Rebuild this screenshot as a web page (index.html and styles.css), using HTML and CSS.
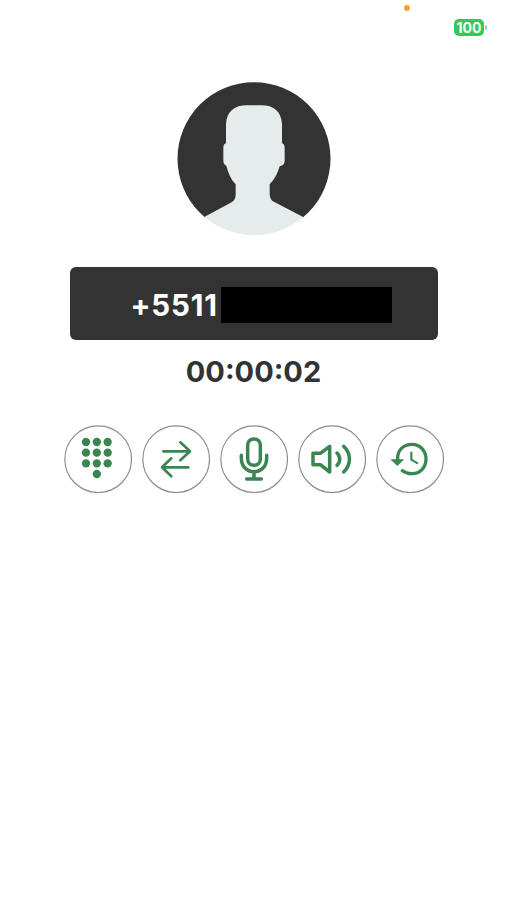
FILE: index.html
```html
<!DOCTYPE html>
<html lang="en">
<head>
<meta charset="utf-8">
<title>Call</title>
<link rel="stylesheet" href="styles.css">
</head>
<body>
<header class="status">
  <span class="mic-dot"></span>
  <span class="battery"><span class="level">100</span><span class="cap"></span></span>
</header>
<main class="call">
  <svg class="avatar" viewBox="21 21 462 462">
    <defs><clipPath id="round"><circle cx="252" cy="251" r="229.500"/></clipPath></defs>
    <g clip-path="url(#round)">
      <path fill="#333" d="M0 0H500V428H0Z"/>
      <path fill="#e6ebec" d="M168 205V147C170 108 196 91 229 91H275C309 91 334 108 336 147V205C342 206 344 212 344 221V256C344 267 339 272 329 274C323 294 314 313 299 328V356C299 368 303 376 313 381L398 425L430 500H70L104 425L185 382C194 377 197 369 197 358V328C183 313 174 294 169 272C162 269 160 264 160 255V220C160 211 162 206 168 205Z"/>
    </g>
  </svg>
  <div class="number"><span class="prefix">+5511</span><span class="redacted"></span></div>
  <div class="timer">00:00:02</div>
  <nav class="actions">
    <button class="action" aria-label="Keypad"><svg viewBox="12 15 204 204">
      <circle class="ring" cx="114.500" cy="117.500" r="100"/>
      <g class="solid"><circle cx="78" cy="66" r="12.500"/><circle cx="110.500" cy="66" r="12.500"/><circle cx="143" cy="66" r="12.500"/><circle cx="78" cy="98" r="12.500"/><circle cx="110.500" cy="98" r="12.500"/><circle cx="143" cy="98" r="12.500"/><circle cx="78" cy="130" r="12.500"/><circle cx="110.500" cy="130" r="12.500"/><circle cx="143" cy="130" r="12.500"/><circle cx="110.500" cy="162" r="12.500"/></g>
    </svg></button>
    <button class="action" aria-label="Transfer"><svg viewBox="12 15 204 204">
      <circle class="ring" cx="114.500" cy="117.500" r="100"/>
      <path class="line thin" d="M76 94H156M127 67L156 94L127 121M151 142H72M100 115L72 142L100 169"/>
    </svg></button>
    <button class="action" aria-label="Mute"><svg viewBox="12 15 204 204">
      <circle class="ring" cx="114.500" cy="117.500" r="100"/>
      <path class="line" d="M114 57C102 57 95 65 95 76V116C95 128 102 136 114 136S133 128 133 116V76C133 65 126 57 114 57ZM76 106V115C76 139 92 155 114 155S152 139 152 115V106M114 155V176M92 177H136"/>
    </svg></button>
    <button class="action" aria-label="Speaker"><svg viewBox="12 15 204 204">
      <circle class="ring" cx="114.500" cy="117.500" r="100"/>
      <path class="line" d="M57 100H79L107 79V156L79 134H57ZM129 99C140 109 140 126 129 136M149 79C172 101 172 134 149 156"/>
    </svg></button>
    <button class="action" aria-label="History"><svg viewBox="12 15 204 204">
      <circle class="ring" cx="114.500" cy="117.500" r="100"/>
      <path class="line flat" d="M77 121C74 91 94 73 120 73C146 73 162 94 162 117C162 143 144 161 120 161C107 161 96 156 88 149"/>
      <path class="solid" d="M55 118H97L76 138Z"/>
      <path class="line clock" d="M118 95V119L138 131"/>
    </svg></button>
  </nav>
</main>
</body>
</html>
```
FILE: styles.css
```css
* { box-sizing: border-box; }

body {
  margin: 0;
  min-height: 900px;
  background: #fff;
  font-family: Inter, "Liberation Sans", sans-serif;
  color: #333;
}

.status {
  height: 82px;
  padding: 5px 20px 0 404px;
  display: flex;
  align-items: flex-start;
  justify-content: space-between;
}

.mic-dot {
  width: 6px;
  height: 6px;
  border-radius: 50%;
  background: #f9a136;
}

.battery {
  margin-top: 14px;
  display: flex;
  align-items: center;
  gap: 1px;
}

.level {
  width: 30px;
  height: 17px;
  border-radius: 5px;
  background: #35c759;
  color: #fff;
  font-size: 14px;
  font-weight: 700;
  line-height: 17px;
  text-align: center;
}

.cap {
  width: 2px;
  height: 5px;
  border-radius: 0 2px 2px 0;
  background: #8edda2;
}

.call {
  display: flex;
  flex-direction: column;
  align-items: center;
}

.avatar {
  width: 154px;
  height: 154px;
  display: block;
}

.number {
  width: 368px;
  height: 73px;
  margin-top: 31px;
  padding-left: 61px;
  border-radius: 6px;
  background: #333;
  display: flex;
  align-items: center;
}

.prefix {
  width: 90px;
  padding-top: 2px;
  color: #fff;
  font-size: 29.500px;
  font-weight: 650;
  letter-spacing: 0.8px;
  line-height: 36px;
}

.redacted {
  width: 171px;
  height: 36px;
  margin-top: 3px;
  background: #000;
}

.timer {
  margin-top: 14px;
  font-size: 29px;
  font-weight: 650;
  line-height: 36px;
}

.actions {
  margin-top: 35px;
  padding-left: 1px;
  display: flex;
  gap: 10.100px;
}

.action {
  width: 68px;
  height: 68px;
  padding: 0;
  border: 0;
  border-radius: 50%;
  background: none;
}

.action svg {
  width: 68px;
  height: 68px;
  display: block;
}

.ring {
  fill: none;
  stroke: #8c8c8c;
  stroke-width: 3.500;
}

.solid { fill: #3b8553; }

.line {
  fill: none;
  stroke: #3b8553;
  stroke-width: 10.500;
  stroke-linecap: round;
  stroke-linejoin: round;
}

.thin { stroke-width: 8; }
.flat { stroke-linecap: butt; stroke-width: 10; }
.clock { stroke-linecap: butt; stroke-width: 6.500; }
```
